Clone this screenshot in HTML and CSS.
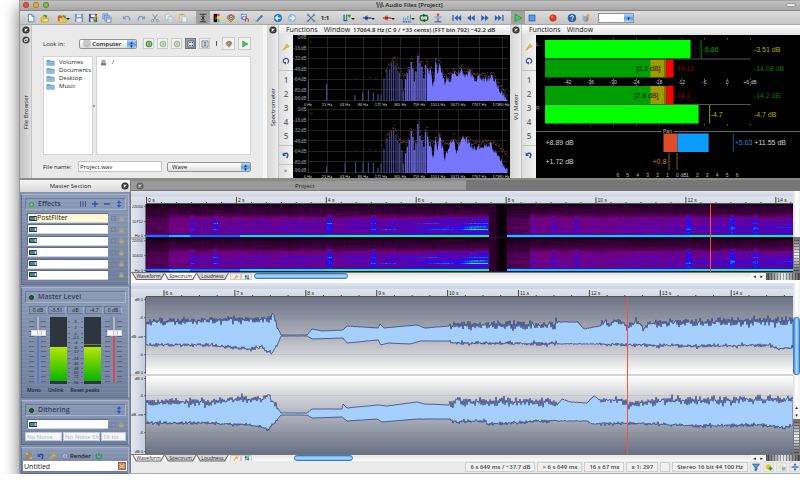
FILE: index.html
```
<!DOCTYPE html>
<html lang="en">
<head>
<meta charset="utf-8">
<title>Audio Files [Project]</title>
<link rel="stylesheet" href="styles.css">
</head>
<body>
<svg class="defs" aria-hidden="true">
  <defs>
    <linearGradient id="chTop" x1="0" y1="0" x2="0" y2="1"><stop offset="0" stop-color="#6a7284"/><stop offset=".5" stop-color="#adb0ba"/><stop offset=".74" stop-color="#cfd0d5"/><stop offset="1" stop-color="#ffffff"/></linearGradient>
    <linearGradient id="chBottom" x1="0" y1="0" x2="0" y2="1"><stop offset="0" stop-color="#ffffff"/><stop offset=".26" stop-color="#d2d3d8"/><stop offset=".5" stop-color="#b0b3bd"/><stop offset="1" stop-color="#687084"/></linearGradient>
    <linearGradient id="level" x1="0" y1="0" x2="0" y2="1"><stop offset="0" stop-color="#b4e600"/><stop offset="1" stop-color="#08b400"/></linearGradient>
  </defs>
  <symbol id="new" viewBox="0 0 12 12"><path d="M3 1.500h4l2.500 2.500v6.500H3z" fill="#fff" stroke="#2f7fd0"/><path d="M7 1.500v2.500h2.500" fill="none" stroke="#2f7fd0"/></symbol>
  <symbol id="open" viewBox="0 0 12 12"><path d="M1.500 5h3l1 1h4.500v4.500H1.500z" fill="#f4cc3c" stroke="#b89020" stroke-width=".6"/><path d="M3 10.500L5 7h6l-2 3.500z" fill="#ffe47a" stroke="#b89020" stroke-width=".5"/><path d="M3 4.500C4 2 6 1.500 7.500 3l1-1v3.500H5.500l1-1C5.500 3.500 4.500 3.500 3 4.500z" fill="#36a536"/></symbol>
  <symbol id="openred" viewBox="0 0 12 12"><path d="M1 3.500l2.500-1 3 2v5.500H1z" fill="#e8532d"/><path d="M3 6h3l1 1h4v4H3z" fill="#f4cc3c" stroke="#b89020" stroke-width=".5"/><path d="M5 4.500c1-2 3-2.500 4.500-1l1-1V6h-3l1-1C7.500 4 6.500 4 5 4.500z" fill="#36a536"/></symbol>
  <symbol id="save" viewBox="0 0 12 12"><rect x="1.500" y="1.500" width="9" height="9" fill="#7ba4d4" stroke="#5680b4" stroke-width=".7"/><rect x="3.500" y="1.800" width="5" height="3" fill="#e8eef6"/><rect x="3" y="6.500" width="6" height="4" fill="#eef2f8"/></symbol>
  <symbol id="saveas" viewBox="0 0 12 12"><rect x="1.500" y="1.500" width="9" height="9" fill="#2f5fb4" stroke="#1e3f80" stroke-width=".7"/><rect x="3.500" y="1.800" width="5" height="3" fill="#e8eef6"/><rect x="3" y="6.500" width="6" height="4" fill="#eef2f8"/><path d="M5 8l5-6 1.500 1.500L6.500 9.500z" fill="#e8862d"/><rect x="7" y="8" width="3" height="3" fill="#2ea02e"/></symbol>
  <symbol id="saveall" viewBox="0 0 12 12"><g stroke="#5680b4" stroke-width=".6" fill="#9fbde0"><rect x="1" y="1" width="6" height="6"/><rect x="3" y="3" width="6" height="6"/><rect x="5" y="5" width="6" height="6"/></g><rect x="6.500" y="8" width="3" height="2.500" fill="#eef2f8"/></symbol>
  <symbol id="undo" viewBox="0 0 12 12"><path d="M2.500 6C5 3 9.500 3.500 9.500 9" fill="none" stroke="#76a0cc" stroke-width="1.500"/><path d="M1 3v4.500h4.500z" fill="#76a0cc"/></symbol>
  <symbol id="redo" viewBox="0 0 12 12"><path d="M9.500 6C7 3 2.500 3.500 2.500 9" fill="none" stroke="#76a0cc" stroke-width="1.500"/><path d="M11 3v4.500H6.500z" fill="#76a0cc"/></symbol>
  <symbol id="cut" viewBox="0 0 12 12"><path d="M3 1.500l5 7M9 1.500l-5 7" stroke="#8794aa" stroke-width="1.200"/><g fill="none" stroke="#7d9ccc" stroke-width="1.200"><circle cx="3.200" cy="9.300" r="1.400"/><circle cx="8.800" cy="9.300" r="1.400"/></g></symbol>
  <symbol id="copy" viewBox="0 0 12 12"><g fill="#e6ebf6" stroke="#a4b1cc" stroke-width=".8"><path d="M1.500 1.500h4l1.500 1.500v5h-5.500z"/><path d="M5 4.500h4l1.500 1.500v5H5z"/></g><path d="M6 7.500h3.500M6 9h3.500" stroke="#a4b1cc" stroke-width=".6"/></symbol>
  <symbol id="paste" viewBox="0 0 12 12"><rect x="1.500" y="2" width="7" height="8.500" fill="#ecd9a0" stroke="#cbb061" stroke-width=".7"/><rect x="3.500" y="1" width="3" height="1.800" fill="#a8a8a8"/><path d="M5 4.500h4l1.500 1.500v5H5z" fill="#e8eefa" stroke="#9db3d6" stroke-width=".7"/></symbol>
  <symbol id="cursor" viewBox="0 0 12 12"><path d="M2 1.500h8M2 10.500h8M6 1.500v9M4 3.500l4 5M8 3.500l-4 5" fill="none" stroke="#333" stroke-width="1.100"/></symbol>
  <symbol id="palette" viewBox="0 0 12 12"><rect x="2" y="1" width="4" height="10" fill="#111"/><rect x="6" y="1" width="3" height="3" fill="#f028d0"/><rect x="6" y="4" width="4" height="3.500" fill="#ffe500"/><rect x="6" y="7.500" width="3" height="3.500" fill="#19c2ea"/><path d="M4 4l3 2-3 2z" fill="#ee3333"/></symbol>
  <symbol id="audio" viewBox="0 0 12 12"><path d="M2 3.500l4-2 4 2v3L6 11 2 7z" fill="#e9a53a" stroke="#9c661c" stroke-width=".8"/><circle cx="6.200" cy="5.300" r="2.300" fill="#dbe7fa" stroke="#27478e"/><circle cx="6.200" cy="5.300" r=".8" fill="#27478e"/></symbol>
  <symbol id="magnet" viewBox="0 0 12 12"><rect x="1.500" y="1.500" width="6" height="5.500" fill="#fff" stroke="#4962a8" stroke-width=".8"/><circle cx="5" cy="6" r="2.300" fill="#cfe0fa" stroke="#293f8a" stroke-width=".8"/><path d="M6.500 10.500V7.500q1.800-2 3.500 0v3" fill="none" stroke="#e43b3b" stroke-width="1.300"/></symbol>
  <symbol id="pen" viewBox="0 0 12 12"><path d="M2 10.500L9 2.500l1.500 1.500L4 10z" fill="#3f86dc" stroke="#1e4e96" stroke-width=".5"/><path d="M1 11l1.500-3L4 9.500z" fill="#e8b03a"/></symbol>
  <symbol id="left" viewBox="0 0 12 12"><circle cx="6" cy="6" r="4.800" fill="#1f78d8"/><path d="M9 6H3.500M6 3.200L3.200 6 6 8.800" fill="none" stroke="#fff" stroke-width="1.500"/></symbol>
  <symbol id="right" viewBox="0 0 12 12"><circle cx="6" cy="6" r="4.800" fill="#8dbbe4"/><path d="M3 6h5.500M6 3.200L8.800 6 6 8.800" fill="none" stroke="#fff" stroke-width="1.500"/></symbol>
  <symbol id="fit" viewBox="0 0 12 12"><path d="M2 2l8 8M10 2l-8 8" stroke="#55779c" stroke-width="1.500"/><path d="M1.500 4V1.500H4M8 1.500h2.500V4M10.500 8v2.500H8M4 10.500H1.500V8" fill="none" stroke="#6d9ec0" stroke-width="1.300"/></symbol>
  <symbol id="marker" viewBox="0 0 12 12"><path d="M2.500 2v8M2.500 9h4" stroke="#2459b0" stroke-width="1.500" fill="none"/><path d="M5.500 2v7" stroke="#2ba02e" stroke-width="1.500"/><path d="M6 2h5L9 6z" fill="#2ba02e"/></symbol>
  <symbol id="blueflag" viewBox="0 0 12 12"><path d="M1 6h10" stroke="#1e2f78" stroke-width="1.300"/><path d="M3.500 3.500L8 6 3.500 8.500z" fill="#1e3fa4"/><path d="M6 3v6" stroke="#1e2f78"/></symbol>
  <symbol id="redflag" viewBox="0 0 12 12"><path d="M1 6h10" stroke="#9e2020" stroke-width="1.300"/><path d="M3.500 3.500L8 6 3.500 8.500z" fill="#d62a1a"/><path d="M6 3v6" stroke="#801818"/></symbol>
  <symbol id="curve" viewBox="0 0 12 12"><path d="M1 10.500h10" stroke="#2459b0" stroke-width="1.500" stroke-dasharray="2 1"/><path d="M2 9V5M4.500 9V6M7 9V3.500M10 9V2" stroke="#4c9ddc" stroke-width="1.200"/></symbol>
  <symbol id="loop" viewBox="0 0 12 12"><rect x="1.500" y="3" width="9" height="6" rx="2" fill="none" stroke="#1d7c3c" stroke-width="1.700"/><path d="M5 1l3 2-3 2zM7 7v4L4 9z" fill="#164f28"/></symbol>
  <symbol id="scrub" viewBox="0 0 12 12"><path d="M6 1v10" stroke="#e23a2a" stroke-width="1.500"/><path d="M1 4h10L8.500 7h-5z" fill="#88aede"/><path d="M2 10.500h8" stroke="#4974b4" stroke-width="1.500"/><circle cx="6" cy="2" r="1.400" fill="#e23a2a"/></symbol>
  <symbol id="first" viewBox="0 0 12 12"><path d="M.5 2.500h1.500v7H.5zM11 2.500v7L7 6zM7 2.500v7L3 6z" fill="#245ec4"/></symbol>
  <symbol id="rew" viewBox="0 0 12 12"><path d="M10.500 2.500v7L6 6zM6 2.500v7L1.500 6z" fill="#245ec4"/></symbol>
  <symbol id="ffw" viewBox="0 0 12 12"><path d="M1.500 2.500v7L6 6zM6 2.500v7L10.500 6z" fill="#245ec4"/></symbol>
  <symbol id="last" viewBox="0 0 12 12"><path d="M11.500 2.500H10v7h1.500zM1 2.500v7L5 6zM5 2.500v7L9 6z" fill="#245ec4"/></symbol>
  <symbol id="play" viewBox="0 0 12 12"><path d="M2.500 1.500v9L10.500 6z" fill="#45c95a" stroke="#18883a" stroke-width=".8"/></symbol>
  <symbol id="stop" viewBox="0 0 12 12"><rect x="2.500" y="2.500" width="7" height="7" fill="#5a9ee8" stroke="#2459b0"/></symbol>
  <symbol id="rec" viewBox="0 0 12 12"><circle cx="6" cy="6" r="4" fill="#e8371a" stroke="#a82a12" stroke-width=".6"/><circle cx="5" cy="4.500" r="1.500" fill="#f27a5c"/></symbol>
  <symbol id="help" viewBox="0 0 12 12"><circle cx="6" cy="6" r="4.800" fill="#2c67b8" stroke="#1c4078" stroke-width=".5"/><path d="M4.300 4.800Q4.500 3 6.200 3 8 3.200 7.600 5 6.200 5.800 6.100 7M6.100 8v1.300" fill="none" stroke="#fff" stroke-width="1.200"/></symbol>
  <symbol id="whats" viewBox="0 0 12 12"><path d="M2 3l4 1v7L2 9z" fill="#7db4e4"/><path d="M6 4l3-1v6l-3 2z" fill="#c5884a"/><circle cx="8.500" cy="3" r="2" fill="#e8a84a"/></symbol>
  <symbol id="folder" viewBox="0 0 10 8"><path d="M.5 1h3.500l1 1h4.500v5.500H.5z" fill="#6f9fc6"/><rect x=".5" y="3" width="9" height="4.500" fill="#91b9d8"/></symbol>
  <symbol id="disk" viewBox="0 0 8 10"><path d="M1.500 1h5L7.500 6v3H.5V6z" fill="#b0b0b0"/><path d="M.5 6h7v3h-7z" fill="#777"/></symbol>
  <symbol id="mac" viewBox="0 0 10 10"><rect x="1" y="1" width="8" height="6" fill="#c8c8c8" stroke="#999" stroke-width=".5"/><path d="M2 8h6v1H2z" fill="#999"/></symbol>
  <symbol id="wrench" viewBox="0 0 12 12"><path d="M1.500 11L6 6" stroke="#e8a81c" stroke-width="2.200"/><path d="M5 5.500Q5 2 8.500 1.500L7.500 4l1.500 1L11 3.500Q11 7 7 7z" fill="#f4bc2c" stroke="#c08814" stroke-width=".5"/></symbol>
  <symbol id="cycle" viewBox="0 0 12 12"><path d="M4 9.500A4 4 0 1 1 8 9.500" fill="none" stroke="#3c5796" stroke-width="1.900"/><path d="M2 7.500h4v4z" fill="#3c5796"/></symbol>
  <symbol id="revert" viewBox="0 0 12 12"><path d="M3 4.500C8 1.500 11 5 7 10.500" fill="none" stroke="#2c4c9c" stroke-width="2"/><path d="M1 2v5.500h5z" fill="#2c4c9c"/></symbol>
  <symbol id="nav" viewBox="0 0 12 12"><circle cx="6" cy="6" r="4" fill="#fff" stroke="#448c36" stroke-width="2"/><path d="M6 3.500v5M3.500 6h5" stroke="#448c36" stroke-width="1.700"/></symbol>
  <symbol id="grid" viewBox="0 0 12 12"><rect x="1.500" y="1.500" width="9" height="9" fill="#fff" stroke="#3c4c64" stroke-width="1.200"/><path d="M3.500 4h2M7 4h2M3.500 8h2M7 8h2" stroke="#2c3c54" stroke-width="1.700"/></symbol>
  <symbol id="list" viewBox="0 0 12 12"><rect x="1.500" y="1.500" width="9" height="9" fill="#fff" stroke="#52627a" stroke-width="1.200"/><path d="M4 4h4M4 6h4M4 8h4" stroke="#2c3c54" stroke-width="1.200"/></symbol>
  <symbol id="close" viewBox="0 0 8 8"><circle cx="4" cy="4" r="3.600" fill="#333"/><path d="M2.600 2.600l2.800 2.800M5.400 2.600L2.600 5.400" stroke="#fff" stroke-width="1.100"/></symbol>
  <symbol id="float" viewBox="0 0 8 8"><circle cx="4" cy="4" r="3.600" fill="#444"/><path d="M2.500 3.500h2.500v2H2.500zM3.500 2.500h2v2" fill="none" stroke="#fff" stroke-width=".7"/></symbol>
  <symbol id="slot" viewBox="0 0 8 5"><rect width="8" height="5" rx=".6" fill="#303848"/><rect x="1" y="1" width="4" height="3" fill="#2f8f92"/><rect x="5.500" y="1" width="2" height="3" fill="#c4ccd8"/></symbol>
  <symbol id="lock" viewBox="0 0 6 8"><path d="M1.500 4V2.500q1.500-2 3 0V4" fill="none" stroke="#a4acac" stroke-width=".9"/><rect x=".5" y="4" width="5" height="3.500" fill="#b5a870"/></symbol>
  <symbol id="plus" viewBox="0 0 8 8"><path d="M4 1v6M1 4h6" stroke="#2c55b4" stroke-width="1.500"/></symbol>
  <symbol id="minus" viewBox="0 0 8 8"><path d="M1 4h6" stroke="#2c55b4" stroke-width="1.500"/></symbol>
  <symbol id="split" viewBox="0 0 8 8"><path d="M.5 4h7" stroke="#2c55b4" stroke-width="1.200"/><path d="M4 0l1.500 2.500h-3zM4 8l1.500-2.500h-3z" fill="#2c55b4"/></symbol>
  <symbol id="bars" viewBox="0 0 8 8"><path d="M1.500 1v6M4 1v6M6.500 1v6" stroke="#3e5794"/></symbol>
  <symbol id="updown" viewBox="0 0 8 8"><path d="M4 0l2.300 3H1.700zM4 8l2.300-3H1.700z" fill="#2460cc"/><path d="M4 2v4" stroke="#2460cc" stroke-width="1.200"/></symbol>
  <symbol id="power" viewBox="0 0 12 12"><path d="M3.500 3A4.200 4.200 0 1 0 8.500 3M6 1v5" fill="none" stroke="#16922a" stroke-width="1.500"/></symbol>
  <symbol id="cd" viewBox="0 0 12 12"><circle cx="6" cy="6" r="4.500" fill="#b4bfe6" stroke="#40508c" stroke-width=".8"/><circle cx="6" cy="6" r="1.500" fill="#fff" stroke="#40508c"/></symbol>
  <symbol id="tree" viewBox="0 0 12 12"><path d="M3 10V4q3-4 6-1M5 10V6h5" fill="none" stroke="#c07c28" stroke-width="1.700"/><circle cx="3" cy="3" r="1.500" fill="#e8c02c"/><circle cx="9" cy="9" r="1.500" fill="#e8c02c"/></symbol>
  <symbol id="box" viewBox="0 0 8 8"><rect x=".5" y=".5" width="7" height="7" fill="#c08c5c" stroke="#805024" stroke-width=".8"/><path d="M1.500 2.500q2.500 3 5 0M1.500 6q2.500-3 5 0" fill="none" stroke="#f0d0a4"/></symbol>
  <symbol id="sync" viewBox="0 0 8 8"><path d="M2.500 7V2M5.500 1v5" stroke="#1c6084" stroke-width="1.200"/><path d="M.5 3.500L2.500 1l2 2.500zM3.500 5l2 2.500L7.500 5z" fill="#1c8078"/></symbol>
  <symbol id="funnel" viewBox="0 0 8 8"><path d="M.5 1h7L5 4.500V7L3 8V4.500z" fill="#5698dc" stroke="#1c4c94" stroke-width=".6"/></symbol>
  <symbol id="tag" viewBox="0 0 8 8"><circle cx="3.500" cy="4" r="2.800" fill="#e8c82c"/><path d="M5.500 3.500v4M3.500 5.500h4" stroke="#2c9430" stroke-width="1.500"/></symbol>
  <symbol id="tagblue" viewBox="0 0 8 8"><circle cx="3.500" cy="4" r="2.500" fill="#ece0ac"/><rect x="4" y="4" width="3.500" height="3.500" fill="#94b4e0"/></symbol>
  <symbol id="wave" viewBox="0 0 8 8"><path d="M0 4l1-3 1 6 1.500-6L5 7l1-6 1 5 1-2" fill="none" stroke="#555" stroke-width=".8"/></symbol>
</svg>

<main class="window">
  <header class="titlebar">
    <div class="lights"><button class="light red" aria-label="Close"></button><button class="light amber" aria-label="Minimise"></button><button class="light green" aria-label="Zoom"></button></div>
    <h1><svg class="s8"><use href="#wave"/></svg>Audio Files [Project]</h1>
    <button class="pill" aria-label="Toggle toolbar"></button>
  </header>
  <nav class="toolbar" id="toolbar"></nav>

  <div class="top">
    <section class="dock">
      <div class="strip"><button aria-label="Close"><svg class="s8"><use href="#close"/></svg></button><button aria-label="Float"><svg class="s8"><use href="#float"/></svg></button><span class="vlabel">File Browser</span></div>
      <div class="browser">
        <div class="look">
          <label for="look">Look in:</label>
          <span class="combo"><svg class="s8"><use href="#mac"/></svg><select id="look"><option>Computer</option></select></span>
          <button class="sq" aria-label="Back"><svg class="s8"><use href="#nav"/></svg></button>
          <button class="sq dim" aria-label="Forward"><svg class="s8"><use href="#nav"/></svg></button>
          <button class="sq dim" aria-label="Parent folder"><svg class="s8"><use href="#nav"/></svg></button>
          <button class="sq on" aria-label="Icons"><svg class="s8"><use href="#grid"/></svg></button>
          <button class="sq" aria-label="Details"><svg class="s8"><use href="#list"/></svg></button>
          <span class="bar"></span>
          <button class="sq big" aria-label="Audio"><svg class="s8"><use href="#audio"/></svg></button>
          <button class="sq big" aria-label="Play"><svg class="s8"><use href="#play"/></svg></button>
        </div>
        <div class="lists">
          <ul class="well">
            <li><svg><use href="#folder"/></svg>Volumes</li>
            <li><svg><use href="#folder"/></svg>Documents</li>
            <li><svg><use href="#folder"/></svg>Desktop</li>
            <li><svg><use href="#folder"/></svg>Music</li>
          </ul>
          <span class="grip"></span>
          <ul class="well"><li><svg><use href="#disk"/></svg>/</li></ul>
        </div>
        <div class="name">
          <label for="fname">File name:</label>
          <input id="fname" value="Project.wav">
          <span class="combo"><select aria-label="File type"><option>Wave</option></select></span>
        </div>
      </div>
    </section>

    <section class="dock">
      <div class="strip"><button aria-label="Close"><svg class="s8"><use href="#close"/></svg></button><span class="vlabel">Spectrometer</span></div>
      <div class="meter">
        <div class="menu"><button>Functions</button><button>Window</button><output>17064.8 Hz (C 9 / +33 cents) (FFT bin 792) −42.2 dB</output></div>
        <div class="side"><button aria-label="Settings"><svg class="s8"><use href="#wrench"/></svg></button><button aria-label="Refresh"><svg class="s8"><use href="#cycle"/></svg></button><hr><button>1</button><button>2</button><button>3</button><button>4</button><button>5</button><hr><button aria-label="Revert"><svg class="s8"><use href="#revert"/></svg></button><hr><button class="more">»</button></div>
        <svg class="plot" id="spectro" viewBox="293 35 217 143" preserveAspectRatio="none"></svg>
      </div>
    </section>

    <section class="dock">
      <div class="strip"><button aria-label="Close"><svg class="s8"><use href="#close"/></svg></button><span class="vlabel">VU Meter</span></div>
      <div class="meter">
        <div class="menu"><button>Functions</button><button>Window</button></div>
        <div class="side"><button aria-label="Settings"><svg class="s8"><use href="#wrench"/></svg></button><button aria-label="Refresh"><svg class="s8"><use href="#cycle"/></svg></button><hr><button>1</button><button>2</button><button>3</button><button>4</button><button>5</button><hr><button aria-label="Revert"><svg class="s8"><use href="#revert"/></svg></button></div>
        <svg class="plot" id="vu" viewBox="537 35 263 143" preserveAspectRatio="none"></svg>
      </div>
    </section>
  </div>

  <div class="bottom">
    <aside class="master">
      <div class="mhead"><h2>Master Section</h2><button aria-label="Close"><svg class="s8"><use href="#close"/></svg></button></div>
      <div class="mbody">
        <section class="group">
          <div class="ghead"><i class="led lit"></i><h3>Effects</h3><button aria-label="Columns"><svg class="s8"><use href="#bars"/></svg></button><button aria-label="Add"><svg class="s8"><use href="#plus"/></svg></button><button aria-label="Remove"><svg class="s8"><use href="#minus"/></svg></button><button aria-label="Collapse"><svg class="s8"><use href="#updown"/></svg></button></div>
          <div class="slots" id="slots"></div>
        </section>
        <section class="group">
          <div class="ghead"><i class="led"></i><h3>Master Level</h3></div>
          <div class="values"><output>0 dB</output><output>-3.51</output><output>dB</output><output>-4.7</output><output>0 dB</output></div>
          <div class="faders">
            <input class="fader blue" type="range" aria-label="Left level" value="79">
            <svg class="levels" id="levels" viewBox="49 314 51 70"></svg>
            <input class="fader redf" type="range" aria-label="Right level" value="79">
          </div>
          <div class="mlabels"><button>Mono</button><button>Unlink</button><button>Reset peaks</button></div>
        </section>
        <section class="group">
          <div class="ghead"><i class="led"></i><h3>Dithering</h3><button aria-label="Collapse"><svg class="s8"><use href="#updown"/></svg></button></div>
          <div class="slots" id="dither"></div>
          <div class="opts"><button>No Noise</button><button>No Noise Sh</button><button>16 bit</button></div>
        </section>
        <section class="group last">
          <div class="render"><button aria-label="Presets"><svg class="s8"><use href="#tree"/></svg></button><button aria-label="Reset"><svg class="s8"><use href="#revert"/></svg></button><button aria-label="Settings"><svg class="s8"><use href="#wrench"/></svg></button><button><svg class="s8"><use href="#cd"/></svg>Render</button><button aria-label="Power"><svg class="s8"><use href="#power"/></svg></button></div>
          <div class="preset"><input aria-label="Preset" value="Untitled"><svg class="s8"><use href="#box"/></svg></div>
        </section>
      </div>
    </aside>

    <section class="editor">
      <div class="tabs"><button class="tab"><svg class="s8"><use href="#close"/></svg><span>Project</span></button></div>
      <div class="view">
        <svg class="ruler" id="r1" viewBox="131 191 662 13" preserveAspectRatio="none"></svg>
        <svg class="axis" id="a1" viewBox="131 204 15 68" preserveAspectRatio="none"></svg>
        <div class="gram"><canvas id="gram" width="647" height="68"></canvas></div>
        <div class="vscroll one"><i class="wheel"></i></div>
      </div>
      <div class="foot" data-on="1"></div>
      <div class="view second">
        <svg class="ruler" id="r2" viewBox="131 283 662 14" preserveAspectRatio="none"></svg>
        <svg class="axis" id="a2" viewBox="131 297 15 157" preserveAspectRatio="none"></svg>
        <svg class="waves" id="waves" viewBox="146 297 647 157" preserveAspectRatio="none"></svg>
        <div class="vscroll two"><i class="thumb"></i><b>▴</b><b>▾</b><i class="wheel"></i></div>
      </div>
      <div class="foot" data-on="0"></div>
      <div class="status">
        <span>6 s 649 ms / −37.7 dB</span><span>&gt; 6 s 649 ms</span><span>16 s 67 ms</span><span>x 1: 297</span><span class="blank"></span><span>Stereo 16 bit 44 100 Hz</span>
        <button aria-label="Filter"><svg class="s8"><use href="#funnel"/></svg></button><button aria-label="Add tag"><svg class="s8"><use href="#tag"/></svg></button><button aria-label="Tags"><svg class="s8"><use href="#tagblue"/></svg></button><button aria-label="Centre"><svg class="s8"><use href="#split"/></svg></button>
      </div>
    </section>
  </div>
</main>
<script src="app.js"></script>
</body>
</html>
```
FILE: styles.css
```
* { box-sizing: border-box; }
body { margin: 0; background: #fff; font-family: "Open Sans", "Noto Sans", sans-serif; font-size: 6px; line-height: 8px; color: #222; overflow: hidden; }
button { appearance: none; border: 0; background: none; padding: 0; margin: 0; font: inherit; color: inherit; display: flex; align-items: center; justify-content: center; }
input, select { font: inherit; color: inherit; min-width: 0; border-radius: 0; margin: 0; }
h1, h2, h3, ul { margin: 0; padding: 0; font-weight: 400; font-size: 6px; list-style: none; }
hr { width: 100%; height: 1px; border: 0; margin: 4px 0; background: #c4c4c4; }
svg { display: block; }
.defs { position: absolute; width: 0; height: 0; }
.s8 { width: 8px; height: 8px; flex: none; }

.window { margin-left: 19px; background: #e9e9e9; border-left: 1px solid #999; border-bottom: 1px solid #aaa; box-shadow: 0 8px 14px 1px rgba(0,0,0,.5); }
.titlebar { display: flex; align-items: center; height: 11px; background: linear-gradient(#888 0, #c2c2c2 1px, #a6a6a6); border-bottom: 1px solid #858585; padding: 0 4px 0 3px; }
.lights { display: flex; gap: 4px; width: 60px; }
.light { width: 6px; height: 6px; border-radius: 50%; border: 1px solid rgba(90,50,30,.4); }
.red { background: #ee4b40; } .amber { background: #f3aa35; } .green { background: #78c040; }
.titlebar h1 { flex: 1; display: flex; justify-content: center; gap: 1px; font-weight: 600; }
.pill { width: 10px; height: 4px; margin-left: 50px; border: 1px solid #999; border-radius: 2px; background: #eee; }

.toolbar { display: flex; align-items: center; height: 14px; padding-left: 4px; background: linear-gradient(#dedede, #c4c4c4); border-bottom: 1px solid #aaa; }
.tools { display: flex; margin-right: 5px; height: 13px; }
.tools.wide { margin-right: 6px; }
.tools.far { margin-right: 7px; }
.tools button { width: 14px; height: 13px; position: relative; }
.tools button.arrow { width: 20px; }
.tools button.arrow::after { content: ""; position: absolute; right: 2px; bottom: 4px; border: 2px solid transparent; border-top-color: #222; border-bottom: 0; }
.tools button.on { background: #a2a2a2; }
.tools svg { width: 10px; height: 10px; }
.tools b { font-size: 6px; font-weight: 700; }

.combo { display: flex; align-items: center; position: relative; height: 10px; background: linear-gradient(#fff, #dedede); border: 1px solid #929292; border-radius: 2px; padding-left: 3px; overflow: hidden; }
.combo select { appearance: none; border: 0; background: none; width: 100%; height: 8px; padding: 0 9px 0 1px; line-height: 8px; }
.combo::after { content: "▴\A▾"; white-space: pre; position: absolute; right: 0; top: 0; bottom: 0; width: 9px; font: 5px/4px "DejaVu Sans", sans-serif; text-align: center; color: #124; background: linear-gradient(#b8d8f6, #5d9fe4 55%, #a8d8fc); pointer-events: none; }
.combo.jump { width: 36px; background: #fff; padding: 0; border-radius: 0; }
.combo.jump::after { content: "▾"; line-height: 8px; }

.top { display: grid; grid-template-columns: 247px 243px minmax(0, 1fr); height: 155px; border-bottom: 2px solid #8b8b8b; }
.dock { display: grid; grid-template-columns: 12px minmax(0, 1fr); min-width: 0; }
.strip { background: linear-gradient(90deg, #d6d6d6, #ececec); border-right: 1px solid #c4c4c4; display: flex; flex-direction: column; align-items: center; gap: 2px; padding-top: 1px; }
.vlabel { writing-mode: vertical-rl; transform: rotate(180deg); margin: auto 0; line-height: 8px; white-space: nowrap; }
.dock:first-child .strip { background: linear-gradient(90deg, #c4c4c4, #dedede); }

.browser { background: #eaeaea; padding: 12px 12px 6px 11px; border-right: 4px solid #f6f6f6; display: flex; flex-direction: column; gap: 6px; }
.look { display: flex; align-items: center; gap: 3px; height: 13px; }
.look label { width: 34px; }
.look .combo { width: 59px; margin-right: 3px; }
.look .combo select { font-weight: 600; }
.sq { width: 11px; height: 11px; border: 1px solid #ccc; background: #f2f2f2; flex: none; }
.sq.on { background: #9ca2ac; border-color: #777; }
.sq.dim svg { opacity: .5; }
.sq.big { width: 13px; height: 13px; }
.bar { width: 1px; height: 5px; background: #555; margin: 0 2px 0 3px; }
.lists { display: grid; grid-template-columns: 50px 3px minmax(0, 1fr); flex: 1; }
.grip { width: 2px; height: 2px; background: #999; align-self: center; }
.well { background: #fff; border: 1px solid #d4d4d4; padding: 1px 2px; }
.well li { display: flex; align-items: center; gap: 4px; height: 8px; line-height: 8px; }
.well li svg { width: 9px; height: 7px; flex: none; }
.name { display: flex; align-items: center; height: 11px; }
.name label { width: 35px; white-space: nowrap; }
.name input { width: 84px; height: 11px; border: 1px solid #c4c4c4; background: #fff; padding: 0 1px; margin-right: 5px; }
.name .combo { flex: 1; }

.meter { display: grid; grid-template-columns: 14px minmax(0, 1fr); grid-template-rows: 10px minmax(0, 1fr); min-width: 0; }
.menu { grid-column: 1 / 3; display: flex; align-items: center; gap: 6px; padding-left: 7px; background: linear-gradient(#fff, #e2e2e2); font-size: 7px; white-space: nowrap; overflow: hidden; }
.menu output { font-size: 6px; font-weight: 600; margin-left: -3px; }
.side { background: linear-gradient(90deg, #ddd, #f2f2f2); display: flex; flex-direction: column; align-items: center; padding-top: 5px; }
.side button { height: 14px; font-size: 8px; font-weight: 600; color: #666; width: 100%; flex: none; }
.side hr { margin: 2px 0; flex: none; }
.side .more { height: 8px; transform: rotate(90deg); font-size: 6px; }
.plot { width: 100%; height: 143px; background: #000; }
.plot text, .ruler text, .axis text, .levels text { font-family: "Liberation Sans", Arial, sans-serif; }
.t4 { font-size: 4px; } .t5 { font-size: 5px; } .t7 { font-size: 7px; }

.bottom { display: grid; grid-template-columns: 111px minmax(0, 1fr); }
.mhead { display: flex; align-items: center; height: 12px; background: linear-gradient(#f6f6f6, #d8d8d8); padding-right: 1px; }
.mhead h2 { flex: 1; text-align: center; font-size: 6px; }
.master { border-right: 1px solid #7c7c7c; }
.mbody { background: repeating-linear-gradient(#8292af 0 2px, #7b8ba8 2px 4px); padding: 2px 1px; display: flex; flex-direction: column; gap: 2px; height: 281px; }
.group { border: 1px solid #5f6d88; border-top-color: #a8b4ca; border-right-color: #a8b4ca; padding: 3px 2px 3px 3px; background: linear-gradient(rgba(190,205,230,.22), rgba(60,70,95,.2)); }
.ghead { display: flex; align-items: center; gap: 4px; height: 12px; border: 1px solid #6b7995; border-right-color: #a9b5ca; border-bottom-color: #a9b5ca; padding: 0 2px 0 3px; margin-bottom: 3px; }
.ghead h3 { flex: 1; font-size: 7px; font-weight: 600; color: #38435a; white-space: nowrap; }
.led { width: 5px; height: 5px; border-radius: 50%; background: #12631c; border: 1px solid #0d3c18; }
.led.lit { background: #52e852; border-color: #2f9c3c; }
.slots { display: flex; flex-direction: column; gap: 1px; padding: 0 2px; }
.slot { display: flex; align-items: center; gap: 3px; height: 10px; }
.field { display: flex; align-items: center; flex: 1; height: 10px; background: #fff; border: 1px solid #5e6b86; padding-left: 1px; border-right: 0; border-bottom-color: #cdd5e4; }
.field svg { width: 8px; height: 5px; flex: none; }
.field input { flex: 1; height: 8px; width: 10px; border: 0; padding: 0; background: none; font-size: 7px; }
.slot:first-child .field.named { background: #fff8d4; }
.slot input[type=checkbox] { appearance: none; width: 5px; height: 5px; border: 1px solid #74829e; }
.slot > svg { width: 5px; height: 7px; }
#slots { height: 68px; justify-content: space-between; gap: 0; padding-bottom: 1px; }
.values { display: flex; justify-content: center; gap: 1px; padding: 0 4px; }
.values output { flex: 1; text-align: center; border: 1px solid #6b7995; border-right-color: #a0adc4; height: 8px; line-height: 6px; font-size: 5px; }
.faders { display: flex; justify-content: space-between; height: 70px; padding: 0 4px; margin-top: 1px; }
.levels { width: 51px; height: 70px; overflow: visible; }
.fader { appearance: none; writing-mode: vertical-lr; direction: rtl; width: 17px; height: 66px; margin: 2px 0; background: linear-gradient(90deg, transparent 5px, #7b8aa6 5px 12px, transparent 12px), repeating-linear-gradient(transparent 0 4px, #586580 4px 5px); }
.fader::-webkit-slider-runnable-track { width: 2px; height: 66px; margin: 0 auto; background: linear-gradient(#aeb6c4 20%, #5e78cc 20%); }
.redf::-webkit-slider-runnable-track { background: linear-gradient(#aeb6c4 20%, #d44c4c 20%); }
.fader::-webkit-slider-thumb { appearance: none; width: 15px; height: 6px; margin-left: -6px; background: linear-gradient(90deg, #fafafa 5px, #c8c8c8 5px 6px, #eee 6px 9px, #c8c8c8 9px 10px, #fafafa 10px); border: 1px solid #d8d8dc; }
.mlabels { display: flex; gap: 7px; padding: 1px 2px 0; font-size: 5px; font-weight: 600; height: 9px; white-space: nowrap; color: #1c2434; }
.opts { display: grid; grid-template-columns: 37px 37px 25px; gap: 1px; padding-top: 3px; font-size: 6px; color: #a8b4c8; }
.opts button { height: 9px; background: #f4f6fa; border: 1px solid #c0cada; overflow: hidden; white-space: nowrap; justify-content: flex-start; padding-left: 1px; }
.group.last { padding: 2px 1px; }
.render { display: flex; align-items: center; gap: 4px; height: 11px; padding-left: 2px; }
.render button { font-weight: 600; gap: 1px; }
.preset { display: flex; align-items: center; background: #fff; height: 10px; padding-right: 1px; }
.preset input { flex: 1; border: 0; padding: 0 1px; height: 10px; background: none; font-size: 7px; }

.editor { min-width: 0; display: flex; flex-direction: column; }
.tabs { height: 11px; background: #777; }
.tab { width: 50%; height: 10px; background: #999; justify-content: flex-start; padding-left: 5px; border-top: 1px solid #888; }
.tab svg { opacity: .5; }
.tab span { flex: 1; text-align: center; }
.view { display: grid; grid-template-columns: 15px minmax(0, 1fr) 7px; grid-template-rows: 13px 68px; }
.view.second { grid-template-rows: 14px 157px; border-top: 3px solid #fbfbfb; height: 174px; }
.ruler { grid-column: 1 / 3; width: 100%; height: 100%; background: linear-gradient(#e2e7f0, #ccd5e3 40%, #e0e5ed 45%, #d0d8e4); }
.axis { width: 15px; height: 100%; background: linear-gradient(90deg, #e2e8f0, #c4cddc); }
.gram { background: #000; }
.gram canvas { display: block; width: 100%; height: 68px; }
.waves { width: 100%; height: 157px; }
.vscroll { grid-column: 3; grid-row: 1 / 3; display: flex; flex-direction: column; align-items: stretch; justify-content: flex-end; background: linear-gradient(90deg, #e0e0e0, #fff 50%, #f0f0f0); overflow: hidden; }
.vscroll b { font: 5px/8px "DejaVu Sans", sans-serif; text-align: center; color: #222; }
.vscroll .wheel { height: 35px; background: linear-gradient(rgba(20,20,20,.6), rgba(255,255,255,.2) 50%, rgba(20,20,20,.6)), repeating-linear-gradient(#eee 0 2px, #888 2px 3px); border: 1px solid #777; }
.two .thumb { height: 58px; margin-bottom: 28px; border-radius: 3px; border: 1px solid #3a78c8; background: linear-gradient(90deg, #3c8ce4, #b4dcff 50%, #5aa4ec); }
.foot { display: flex; align-items: center; height: 8px; background: #f4f4f4; padding-left: 1px; border-top: 1px solid #777; }
.view.second + .foot { height: 7px; }
.ftab { width: 33px; height: 7px; font-size: 5px; line-height: 6px; background: #666; clip-path: polygon(0 0, 100% 0, 88% 100%, 12% 100%); padding: 0 1px 1px; margin-right: -1px; }
.ftab span { flex: 1; height: 6px; background: #d8d8d8; clip-path: polygon(0 0, 100% 0, 88% 100%, 12% 100%); }
.ftab.on span { background: #fff; }
.foot > .mini { width: 11px; height: 7px; border: 1px solid #ccc; background: #eee; }
.foot > .ftab + .mini { margin-left: 2px; }
.mini svg { width: 6px; height: 6px; }
.track { flex: 1; height: 7px; margin-left: 1px; background: linear-gradient(#e4e4e4, #fff); display: flex; padding: 0 1px; }
.track i { height: 6px; border-radius: 3px; border: 1px solid #3c7cc8; background: linear-gradient(#5ca0e8, #b4dcff 50%, #6cb0f0); }
.foot b { font: 5px/7px "DejaVu Sans", sans-serif; width: 7px; text-align: center; }
.foot .wheel { width: 34px; height: 7px; margin-left: 1px; background: linear-gradient(90deg, rgba(20,20,20,.7), rgba(255,255,255,.2) 50%, rgba(20,20,20,.7)), repeating-linear-gradient(90deg, #eee 0 2px, #888 2px 3px); }
.status { display: flex; justify-content: flex-end; align-items: center; gap: 2px; height: 12px; background: #ebebeb; white-space: nowrap; }
.status span { height: 10px; line-height: 8px; padding: 0 4px; border: 1px solid #cfcfcf; background: #f0f0f0; font-weight: 600; color: #444; }
.status .blank { width: 10px; }
.status button { width: 11px; height: 10px; border: 1px solid #dcdcdc; }
```
FILE: app.js
```
const $ = id => document.getElementById(id);
let seed = 7;
const rnd = () => (seed = (seed * 16807) % 2147483647) / 2147483647;
const icon = n => `<svg><use href="#${n}"/></svg>`;
const text = (x, y, s, fill, cls = 't7', anchor = 'start') => `<text x="${x}" y="${y}" fill="${fill}" class="${cls}" text-anchor="${anchor}">${s}</text>`;
const rect = (x, y, w, h, fill) => `<rect x="${x}" y="${y}" width="${w}" height="${h}" fill="${fill}"/>`;

// Linear interpolation over [x, y] points
function lerp(pts, x) {
  for (let i = 1; i < pts.length; i++) if (x <= pts[i][0]) {
    const [a, b] = [pts[i - 1], pts[i]];
    return a[1] + (b[1] - a[1]) * Math.max(0, x - a[0]) / (b[0] - a[0]);
  }
  return pts[pts.length - 1][1];
}

// Toolbar: "+" after a name adds a menu arrow, "!" marks a pressed button
const groups = [['new', 'open', 'openred+', 'save', 'saveas', 'saveall'], ['undo', 'redo', 'cut', 'copy', 'paste'], ['cursor!', 'palette', 'audio', 'magnet', 'pen'],
  ['left', 'right'], ['fit', '1:1'], ['marker+', 'blueflag+', 'redflag+', 'curve+', 'loop', 'scrub'], ['first', 'rew', 'ffw', 'last'], ['play!', 'stop'], ['rec'], ['help', 'whats']];
$('toolbar').innerHTML = groups.map((g, i) => `<div class="tools ${i < 2 ? 'wide' : i === 7 ? 'far' : ''}">` + g.map(n => {
  const k = n.replace(/[+!]/, '');
  return `<button aria-label="${k}" class="${n.endsWith('+') ? 'arrow' : n.endsWith('!') ? 'on' : ''}">${k === '1:1' ? '<b>1:1</b>' : icon(k)}</button>`;
}).join('') + '</div>').join('') + '<span class="combo jump"><select aria-label="Preset"><option></option></select></span>';

// Effect slots
const slot = (v, named) => `<div class="slot"><span class="field ${named ? 'named' : ''}">${icon('slot')}<input aria-label="Effect" value="${v}"></span><input type="checkbox" aria-label="Solo">${icon('lock')}</div>`;
$('slots').innerHTML = ['PostFilter', '', '', '', '', ''].map((v, i) => slot(v, i === 0)).join('');
$('dither').innerHTML = slot('', false);

// Spectrometer: two channels of bars, points in thirds of a pixel
const bars = [
  [[130,242],[185,252],[270,285],[293,277],[310,271],[325,277],[339,282],[348,285],[357,235],[366,210],[374,208],[380,190],[386,183],[393,195],[399,212],[404,218],[411,238],[415,272],[421,238],[426,220],[432,208],[438,187],[443,205],[447,245],[452,215],[458,167],[464,190],[470,200],[476,235],[481,195]],
  [[130,515],[185,500],[240,488],[272,487],[294,487],[310,488],[325,488],[339,504],[348,490],[357,447],[366,415],[374,403],[380,395],[386,390],[393,405],[399,420],[404,430],[411,450],[415,490],[421,460],[426,440],[432,420],[438,393],[443,410],[447,450],[452,430],[458,372],[464,408],[470,420],[476,440],[481,395]]];
const solid = [
  [[486,195],[492,225],[497,200],[503,258],[508,250],[511,180],[515,195],[519,230],[523,182],[530,215],[536,240],[540,262],[545,225],[550,245],[556,250],[565,215],[575,235],[590,205],[600,235],[610,215],[625,235],[640,238],[660,240],[680,232],[690,245],[700,262],[715,285],[727,301]],
  [[486,400],[492,440],[497,430],[503,475],[508,455],[511,405],[517,450],[523,405],[530,435],[540,475],[550,455],[565,415],[575,455],[590,420],[600,425],[610,425],[625,450],[650,438],[675,436],[690,455],[705,478],[720,505],[727,516]]];
let g = '';
[37, 109].forEach((top, c) => {
  for (let i = 0; i < 7; i++) {
    g += rect(308, top + i * 10.500, 200, .5, '#444') + text(306.500, top + 2 + i * 10.500 - (i === 6 ? 2 : 0), i ? `-${i * 16}dB` : '0dB', '#999', 't5', 'end');
  }
  [308, 327, 345, 363, 381, 400, 419, 438, 458, 479, 502].forEach((x, i) => {
    g += rect(x, top, .5, 64, '#444') + text(Math.min(x, 501), top + 69, [0, 21, 43, 86, 172, 365, 759, 1551, 3471, 7767, 17380][i] + ' Hz', '#ccc', 't4', 'middle');
  });
  const base = top + 64;
  bars[c].forEach(([x, y]) => {
    g += rect(265 + x / 3 - .5, y / 3, x > 415 ? 1.500 : 1, Math.max(.5, base - y / 3), x < 420 ? '#5050a0' : '#6262cc');
  });
  let d = `M427 ${base}`;
  for (let x = 486; x < 728; x += 1.500) d += `L${265 + x / 3} ${Math.min(base, (lerp(solid[c], x) + (rnd() - .6) * 24) / 3)}`;
  g += `<path d="${d}V${base}Z" fill="#7676ff"/>`;
  for (let x = 360; x < 728; x += 2) {
    const y = x < 486 ? lerp(bars[c], x) : lerp(solid[c], x);
    g += rect(265 + x / 3, Math.min(y, c ? 440 : 235 + (x > 690 ? 100 : 0)) / 3 - 2 - rnd() * 4 + (c && x > 690 ? (x - 690) / 3 : 0), 1, .6, '#b05a50');
  }
  [[185, 20], [240, 10], [272, 5], [294, 4], [312, 4], [330, 5], [348, 0]].forEach(([x, y]) => g += rect(265 + x / 3, top + 36 + y, 1.500, .6, '#803c38'));
  g += text(310, top + 6, c ? 'R' : 'L', '#444', 't4');
});
$('spectro').innerHTML = g;

// VU meter
g = rect(546, 40, 145, 18.500, '#00ff00') + rect(546, 59.500, 106, 18, '#009e00') + rect(546, 86, 106, 18, '#009e00') + rect(546, 105, 153, 18.500, '#00ff00');
[59.500, 86].forEach(y => g += rect(651, y, 16, 18, '#a09a00') + rect(667, y, 7, 18, '#ff0000') + rect(665, y, 1, 18, '#4c4a00'));
g += rect(546, 58.500, 205, 1, '#555') + rect(546, 104, 205, 1, '#555') + rect(701, 40, 1, 18.500, '#008a00') + rect(709.500, 105, 1, 18.500, '#a09a00');
g += text(637, 71.500, '[2.2 dB]', '#101800') + text(635, 98, '[2.8 dB]', '#101800');
g += text(703, 52, '-6.86', '#00a800') + text(675, 71.500, '-14.11', '#9a0000') + text(675, 98, '-14.2', '#9a0000') + text(711, 117, '-4.7', '#b8b000');
g += text(754, 52, '-3.51 dB', '#b8b000') + text(754, 71.500, '-14.08 dB', '#007a00') + text(754, 98, '-14.2 dB', '#007a00') + text(754, 117, '-4.7 dB', '#b8b000');
g += text(537, 46, 'L', '#999', 't5') + text(537, 110, 'R', '#999', 't5');
for (let i = 0; i < 9; i++) {
  const x = 568.500 + i * 22.700;
  g += text(x, 84, ['-42', '-36', '-30', '-24', '-18', '-12', '-6', '0', '+6 dB'][i], '#ccc', 't5', 'middle');
  [38, 78.500, 84.500, 124].forEach(y => g += rect(x, y, .7, 1.500, '#888'));
}
g += rect(537, 131, 263, 1, '#666') + rect(662, 129, 12, 5, '#000') + text(668, 133, 'Pan', '#bbb', 't5', 'middle');
g += rect(664, 133.500, 14, 18.500, '#dc4e2a') + rect(678, 133.500, 31, 18.500, '#0c9cff') + rect(733, 133.500, 1, 18, '#0c5c9c');
g += text(546.500, 145, '+8.89 dB', '#d4d4d4') + text(546.500, 164, '+1.72 dB', '#d4d4d4') + text(735, 145, '+5.63', '#2486d0') + text(754.500, 145, '+11.55 dB', '#d4d4d4');
g += text(653, 164, '+0.8', '#c8842c') + rect(669, 153, 1, 17, '#8a5a20') + rect(677, 153, 1, 17, '#8a5a20');
'6 5 4 3 2 1 0 1 2 3 4 5 6'.split(' ').forEach((n, i) => g += text(618.500 + i * 9.900, 177, n, '#bbb', 't5', 'middle'));
g += text(681, 177, 'dB', '#bbb', 't5');
$('vu').innerHTML = g;

// Rulers
function ruler(id, x0, step, names, base, per) {
  let r = '';
  for (let i = -1; i < names.length; i++) for (let k = 0; k < per; k++) {
    const x = x0 + (i + k / per) * step;
    if (x < 146 || x > 792) continue;
    r += rect(x, base - (k ? 2 : 7), 1, k ? 2 : 7, '#444');
  }
  names.forEach((n, i) => r += text(x0 + i * step + 2, base - 2, n + ' s', '#222', 't5'));
  $(id).innerHTML = r + rect(146, base - 1, 647, 1, '#555');
}
ruler('r1', 146, 89.900, [0, 2, 4, 6, 8, 10, 12, 14], 204, 6);
ruler('r2', 163.500, 70.900, [6, 7, 8, 9, 10, 11, 12, 13, 14], 297, 4);

const axis = rows => rows.map(([y, s]) => text(143, y + 1.500, s, '#222', 't4', 'end') + rect(144, y, 2, .6, '#333')).join('') + rect(145, 190, .7, 300, '#444');
$('a1').innerHTML = axis([[206, '22050'], [221, '10752'], [235.500, 'Hz 0'], [240.500, '22050'], [255, '10401'], [270, 'Hz 0']]) + rect(131, 237.500, 15, 1, '#888');
$('a2').innerHTML = axis([[299.500, 'dB 0'], [317.500, '-6'], [336, 'dB -oo'], [354.500, '-6'], [372, 'dB 0'], [378, 'dB 0'], [395.500, '-6'], [414, 'dB -oo'], [432.500, '-6'], [451, 'dB 0']]) + rect(131, 374, 15, 2, '#ccc');

// Spectrogram
const stops = [[0, [0, 0, 0]], [.25, [48, 0, 48]], [.5, [116, 0, 124]], [.62, [88, 0, 176]], [.76, [24, 16, 255]], [.86, [0, 96, 255]], [.94, [0, 216, 232]], [1, [24, 255, 110]]];
function colour(v) {
  v = Math.max(0, Math.min(1, v));
  return [0, 1, 2].map(k => lerp(stops.map(s => [s[0], s[1][k]]), v));
}
const ctx = $('gram').getContext('2d');
const img = ctx.createImageData(647, 68);
const rowNoise = Array.from({ length: 40 }, () => rnd()), colNoise = Array.from({ length: 700 }, () => rnd());
const drift = Array.from({ length: 40 }, () => Array.from({ length: 60 }, () => rnd()));
const blue = [[146, 0], [165, .01], [190, .04], [240, .08], [325, .1], [395, .14], [440, .2], [470, .27], [487, .3], [489, 0], [507, 0], [530, .05], [600, .05], [640, .1], [685, .12], [730, .15], [793, .2]];
const hits = [[192, .12, 2], [215, .18, 2], [329, .26, 2], [373, .24, 2], [394, .1, 1], [532, .1, 1], [553, .16, 1], [576, .14, 2], [688, .26, 2], [732, .24, 2], [755, .18, 2]];
for (let x = 0; x < 647; x++) for (let y = 0; y < 68; y++) {
  const X = x + 146, ch = y < 34 ? 0 : 1, r = y - ch * 34;
  const cell = x / 12, ci = Math.floor(cell), slow = drift[r][ci] + (drift[r][ci + 1] - drift[r][ci]) * (cell - ci);
  let v = lerp([[0, .14], [4, .22], [9, .3], [13, .46], [16, .5], [30, .5]], r) + (rnd() - .5) * .04 + (slow - .5) * .08 + (rowNoise[r] - .5) * .05 + (colNoise[x] - .5) * .04;
  if (r > 12 && r < 30) {
    v += lerp(blue, X) * (.35 + rowNoise[r] * .9) * (.6 + slow * .6);
    if (X > 190 && X < 489 && (r === 25 || r === 19)) v += .09 * slow + .05;
  }
  hits.forEach(([hx, a, w]) => { if (Math.abs(X - hx) <= w && r > 10 && r < 31) v += a * (.5 + rnd() * .3); });
  if (X < 169 || (X >= 507 && X < 530)) v -= r > 10 ? .14 : .04;
  if (r >= 30 && r <= 32) v = (X < 169 ? .88 : X < 190 ? .93 : X < 240 ? .87 : X < 325 ? .96 : X < 489 ? .99 : X < 690 ? .94 : .98) - (r === 30 ? .25 : 0);
  if (X >= 489 && X < 507) v = (X < 496 ? .2 : X < 499 ? .1 : X > 505 ? .15 : .03) + rnd() * .04;
  if (r === 33) v = .3;
  const [a, b, c] = colour(v), o = (y * 647 + x) * 4;
  img.data[o] = a; img.data[o + 1] = b; img.data[o + 2] = c; img.data[o + 3] = 255;
}
ctx.putImageData(img, 0, 0);
// Playhead
ctx.fillStyle = '#f8502c';
ctx.fillRect(564, 0, 1, 68);

// Waveforms: upper and lower envelope of each channel
const env = [
  [[146,322],[190,321],[230,319],[250,320],[270,319],[273,313],[276,324],[281,335],[307,335],[312,329],[322,331],[343,330],[347,326],[378,328],[380,324],[384,328],[417,325],[425,328],[450,326],[500,325],[550,325],[554,326],[558,322],[578,322],[584,329],[600,326],[605,321],[608,325],[617,320],[627,327],[636,321],[643,328],[650,323],[793,321]],
  [[146,345],[205,345],[230,347],[250,349],[262,347],[267,351],[272,353],[277,346],[281,336],[307,336],[312,339],[343,338],[347,343],[378,340],[381,345],[388,343],[410,344],[420,341],[450,341],[453,343],[590,344],[700,346],[770,345],[778,349],[793,347]],
  [[146,402],[210,402],[240,399],[262,400],[269,396],[275,404],[281,413],[307,413],[312,409],[342,409],[343,404],[347,408],[378,405],[387,406],[417,402],[425,404],[451,405],[457,399],[462,402],[550,402],[557,405],[562,399],[570,402],[587,403],[594,396],[600,400],[620,400],[628,404],[660,401],[793,399]],
  [[146,423],[210,423],[250,425],[262,427],[268,430],[276,421],[281,415],[307,415],[312,418],[342,417],[347,421],[377,419],[382,422],[417,419],[450,419],[457,422],[485,421],[488,424],[550,421],[587,421],[592,424],[640,423],[700,426],[760,425],[785,428],[793,425]]];
function noisy(pts, c) {
  const low = c % 2, out = [];
  let i = 0;
  for (let x = 146; x <= 793.500; x += 1, i++) {
    const calm = x > 277 && x < 450, slick = x > 556 && x < 600, gentle = x < 277 || (x > 600 && x < 650);
    const amp = calm ? .2 : slick ? .6 : low ? 1.800 : gentle ? 3.400 : 4.200;
    const peak = rnd() > .9 && !calm && !slick ? 1.700 : 1;
    out.push(`${x} ${(lerp(pts, x) + (i % 2 ? 1 : -1) * rnd() * amp * peak + (rnd() - .5) * amp * .5).toFixed(1)}`);
  }
  return out;
}
g = rect(146, 297, 647, 77, 'url(#chTop)') + rect(146, 376, 647, 78, 'url(#chBottom)') + rect(146, 374, 647, 2, '#d4d4d4');
[[0, 1], [2, 3]].forEach(([a, b]) => {
  const up = noisy(env[a], a), down = noisy(env[b], b).reverse();
  g += `<path d="M${up.join('L')}L${down.join('L')}Z" fill="#a5cffd" stroke="#2b3470" stroke-width=".7"/>`;
});
[317.500, 354.500, 395.500, 432.500].forEach(y => g += `<path d="M146 ${y}H793" stroke="#778" stroke-opacity=".25" stroke-width=".6"/>`);
$('waves').innerHTML = g + rect(627, 297, 1, 157, '#f8503c');

// Master level meters
g = rect(49, 316, 17, 67, '#2d3540') + rect(83, 316, 17, 67, '#2d3540') + rect(49, 346, 17, 34, 'url(#level)') + rect(83, 346, 17, 34, 'url(#level)') + rect(83, 343, 17, 1, '#6b8a10');
[[320, '6'], [326, '2'], [332, '0'], [336, '-0.5'], [341, '-3'], [346, '-6'], [350, '-12'], [357, '-24'], [362, '-36'], [367, '-48'], [371, '-60'], [375, '-72'], [381, '-96']].forEach(([y, s]) => {
  g += text(74.500, y + 1.500, s, '#1c2434', 't4', 'middle') + rect(67, y, 2, .6, '#455') + rect(80, y, 2, .6, '#455');
});
$('levels').innerHTML = g;

// Tab strips below the two views
document.querySelectorAll('.foot').forEach(f => {
  const on = f.dataset.on, start = on === '1' ? 0 : 8, len = on === '1' ? 19 : 12;
  f.innerHTML = ['Waveform', 'Spectrum', 'Loudness'].map((n, i) => `<button class="ftab ${String(i) === on ? 'on' : ''}"><span>${n}</span></button>`).join('') +
    `<button class="mini" aria-label="Settings">${icon('wrench')}</button><button class="mini" aria-label="Sync">${icon('sync')}</button><div class="track"><i style="margin-left:${start}%;width:${len}%"></i></div><b>◂</b><b>▸</b><span class="wheel"></span>`;
});
```
